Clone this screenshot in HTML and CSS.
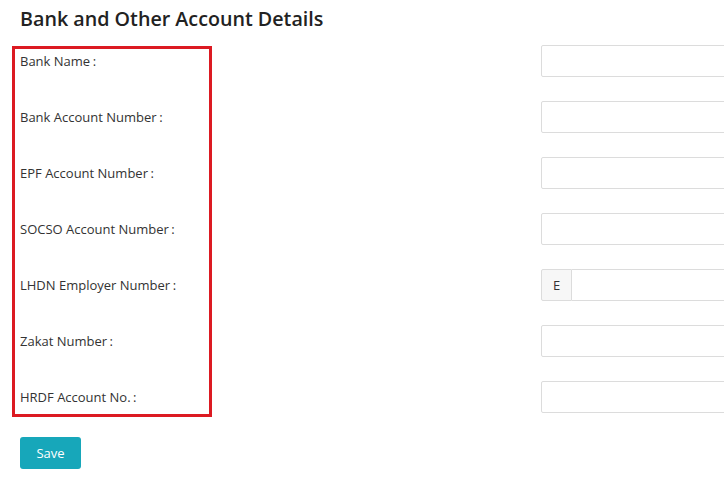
FILE: index.html
```html
<!DOCTYPE html>
<html lang="en">
<head>
<meta charset="utf-8">
<title>Bank and Other Account Details</title>
<link rel="stylesheet" href="styles.css">
</head>
<body>
<div class="page">
  <h2 class="title">Bank and Other Account Details</h2>
  <form class="form">
    <div class="labels">
      <label class="label">Bank Name<span class="colon">:</span></label>
      <label class="label">Bank Account Number<span class="colon">:</span></label>
      <label class="label">EPF Account Number<span class="colon">:</span></label>
      <label class="label">SOCSO Account Number<span class="colon">:</span></label>
      <label class="label">LHDN Employer Number<span class="colon">:</span></label>
      <label class="label">Zakat Number<span class="colon">:</span></label>
      <label class="label">HRDF Account No.<span class="colon">:</span></label>
    </div>
    <div class="fields">
      <input class="input" type="text">
      <input class="input" type="text">
      <input class="input" type="text">
      <input class="input" type="text">
      <div class="group"><span class="addon">E</span><input class="input group-input" type="text"></div>
      <input class="input" type="text">
      <input class="input" type="text">
    </div>
  </form>
  <button class="btn" type="button">Save</button>
</div>
</body>
</html>
```
FILE: styles.css
```css
html, body {
  margin: 0;
  padding: 0;
  background: #fff;
  overflow: hidden;
}
body {
  font-family: "Open Sans", "Noto Sans", sans-serif;
  color: #333;
}
.page {
  padding: 0 20px;
  width: 900px;
}
.title {
  margin: 7px 0 0;
  font-size: 19.7px;
  line-height: 24px;
  font-weight: 600;
  color: #222;
}
.form {
  display: flex;
  align-items: flex-start;
  margin-top: 14px;
}
.labels {
  box-sizing: border-box;
  width: 200px;
  margin-left: -8px;
  margin-top: 1px;
  border: 3px solid #dc1a22;
  padding: 0 5px 5px;
  display: flex;
  flex-direction: column;
  gap: 32px;
}
.label {
  font-size: 13px;
  line-height: 24px;
  height: 24px;
  white-space: nowrap;
}
.colon {
  margin-left: 2.5px;
}
.fields {
  margin-left: 329px;
  display: flex;
  flex-direction: column;
  gap: 24px;
}
.input {
  box-sizing: border-box;
  width: 320px;
  height: 32px;
  border: 1px solid #dcdcdc;
  border-radius: 2px;
  background: #fff;
  margin: 0;
  padding: 0 8px;
  font: inherit;
}
.group {
  display: flex;
  width: 320px;
}
.addon {
  box-sizing: border-box;
  width: 31px;
  height: 32px;
  border: 1px solid #dcdcdc;
  border-radius: 2px 0 0 2px;
  background: #f7f7f7;
  font-size: 13px;
  line-height: 30px;
  text-align: center;
  color: #333;
}
.group-input {
  flex: 1;
  border-left: none;
  border-radius: 0 2px 2px 0;
}
.btn {
  margin-top: 20px;
  width: 61px;
  height: 32px;
  border: none;
  border-radius: 3px;
  background: #17a7ba;
  color: #fff;
  font-family: inherit;
  font-size: 13px;
  padding: 0;
}
```
